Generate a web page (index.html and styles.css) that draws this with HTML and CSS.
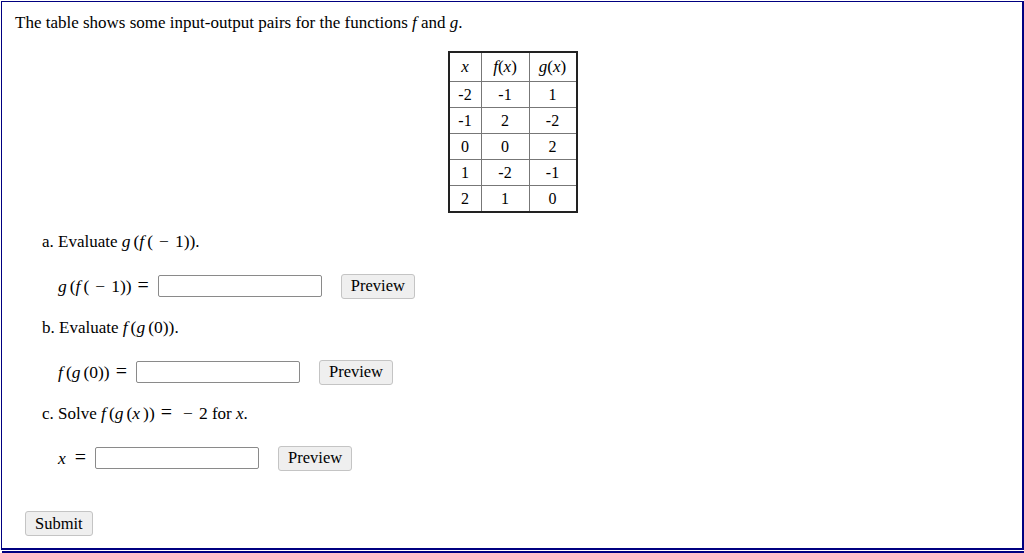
FILE: index.html
```html
<!DOCTYPE html>
<html>
<head>
<meta charset="utf-8">
<link rel="stylesheet" href="styles.css">
</head>
<body>
<div class="frame">
  <p class="intro">The table shows some input-output pairs for the functions <i class="m">f</i> and <i class="m">g</i>.</p>
  <table class="fn-table">
    <tr class="head"><td><i class="m">x</i></td><td><i class="m">f</i>(<i class="m">x</i>)</td><td><i class="m">g</i>(<i class="m">x</i>)</td></tr>
    <tr><td>-2</td><td>-1</td><td>1</td></tr>
    <tr><td>-1</td><td>2</td><td>-2</td></tr>
    <tr><td>0</td><td>0</td><td>2</td></tr>
    <tr><td>1</td><td>-2</td><td>-1</td></tr>
    <tr><td>2</td><td>1</td><td>0</td></tr>
  </table>

  <div class="q-text">a. Evaluate <span class="math"><i class="m">g</i>(<i class="m">f</i>(<span class="op">&minus;</span>1))</span>.</div>
  <div class="answer-row">
    <span class="math label"><i class="m">g</i>(<i class="m">f</i>(<span class="op">&minus;</span>1))<span class="eq">=</span></span>
    <input class="ans" type="text">
    <button class="btn">Preview</button>
  </div>

  <div class="q-text">b. Evaluate <span class="math"><i class="m">f</i>(<i class="m">g</i>(0))</span>.</div>
  <div class="answer-row">
    <span class="math label"><i class="m">f</i>(<i class="m">g</i>(0))<span class="eq">=</span></span>
    <input class="ans" type="text">
    <button class="btn">Preview</button>
  </div>

  <div class="q-text">c. Solve <span class="math"><i class="m">f</i>(<i class="m">g</i>(<i class="m">x</i>))<span class="eq">=</span><span class="op">&minus;</span>2</span> for <i class="m">x</i>.</div>
  <div class="answer-row">
    <span class="math label"><i class="m">x</i><span class="eq">=</span></span>
    <input class="ans" type="text">
    <button class="btn">Preview</button>
  </div>

  <div class="submit-row"><button class="btn">Submit</button></div>
</div>
<div class="rule"></div>
</body>
</html>
```

FILE: styles.css
```css
html, body {
  margin: 0;
  padding: 0;
  background: #fff;
}
body {
  font-family: "Liberation Serif", "Times New Roman", serif;
  font-size: 17px;
  color: #000;
}
.frame {
  margin: 1px 0 0 1px;
  height: 546px;
  border: 1px solid #000080;
  border-right-width: 2px;
  border-bottom-width: 2px;
  padding: 0 0 0 13px;
  box-sizing: content-box;
  width: 1007px;
}
.rule {
  margin-top: 1px;
  height: 2px;
  background: #000080;
  margin-left: 2px;
}
.m {
  font-style: italic;
}
.math .m {
  margin-right: 3px;
}
.intro {
  margin: 0;
  padding-top: 11px;
  line-height: 19px;
}
.fn-table {
  margin: 19px auto 0;
  border-collapse: collapse;
  border: 2px solid #222;
  position: relative;
  left: -6px;
  font-size: 16px;
}
.fn-table td {
  border: 1px solid #777;
  text-align: center;
  padding: 0;
  height: 25px;
  line-height: 18px;
}
.fn-table tr.head td {
  height: 28px;
  font-size: 17px;
}
.fn-table td:nth-child(1) { width: 31px; }
.fn-table td:nth-child(2) { width: 47px; }
.fn-table td:nth-child(3) { width: 46px; }
.q-text {
  margin-left: 27px;
  line-height: 19px;
  height: 19px;
}
.fn-table + .q-text {
  margin-top: 19px;
}
.answer-row + .q-text {
  margin-top: 19px;
}
.answer-row {
  display: flex;
  align-items: center;
  height: 26px;
  margin-top: 22px;
  margin-left: 43px;
}
.math {
  font-size: 17.5px;
}
.op {
  margin: 0 6px;
}
.eq {
  margin: 0 5px 0 6px;
  font-size: 20px;
  line-height: 0;
}
.label {
  margin-right: 4px;
}
.ans {
  width: 164px;
  height: 22px;
  box-sizing: border-box;
  border: 1px solid #8a8a8a;
  border-radius: 2px;
  margin: 0 19px 0 0;
  padding: 0 4px;
  background: #fff;
}
.btn {
  font-family: "Liberation Serif", "Times New Roman", serif;
  font-size: 16.5px;
  height: 25px;
  padding: 0 9px;
  background: #efefef;
  border: 1px solid #c4c4c4;
  border-radius: 3px;
  color: #000;
}
.submit-row {
  margin-top: 40px;
  margin-left: 10px;
}
```
